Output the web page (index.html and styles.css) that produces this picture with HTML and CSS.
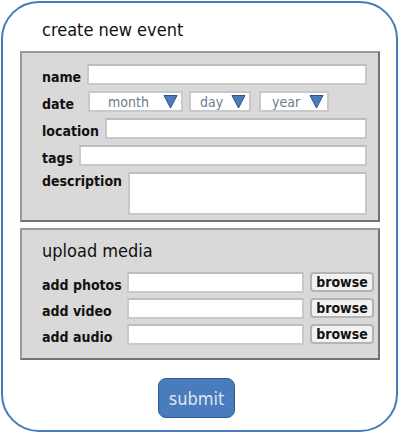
FILE: index.html
```html
<!DOCTYPE html>
<html lang="en">
<head>
    <meta charset="UTF-8">
    <meta name="viewport" content="width=device-width, initial-scale=1.0">
    <title>create new event</title>
    <link rel="stylesheet" href="styles.css">
</head>
<body>
    <div class="card">
        <h1 class="title">create new event</h1>

        <div class="panel details">
            <div class="row">
                <label>name</label>
                <input type="text" class="field">
            </div>
            <div class="row">
                <label class="date-label">date</label>
                <div class="select month"><span>month</span><svg width="15" height="15" viewBox="0 0 15 15"><path d="M1 1.5 H14 L7.5 14 Z" fill="#4a7bbd" stroke="#2c5488" stroke-width="1"/></svg></div>
                <div class="select day"><span>day</span><svg width="15" height="15" viewBox="0 0 15 15"><path d="M1 1.5 H14 L7.5 14 Z" fill="#4a7bbd" stroke="#2c5488" stroke-width="1"/></svg></div>
                <div class="select year"><span>year</span><svg width="15" height="15" viewBox="0 0 15 15"><path d="M1 1.5 H14 L7.5 14 Z" fill="#4a7bbd" stroke="#2c5488" stroke-width="1"/></svg></div>
            </div>
            <div class="row">
                <label>location</label>
                <input type="text" class="field">
            </div>
            <div class="row">
                <label>tags</label>
                <input type="text" class="field">
            </div>
            <div class="row top">
                <label>description</label>
                <textarea class="field area"></textarea>
            </div>
        </div>

        <div class="panel media">
            <h2 class="sub">upload media</h2>
            <div class="uploads">
                <label>add photos</label>
                <input type="text" class="field">
                <button class="browse">browse</button>
                <label>add video</label>
                <input type="text" class="field">
                <button class="browse">browse</button>
                <label>add audio</label>
                <input type="text" class="field">
                <button class="browse">browse</button>
            </div>
        </div>

        <div class="actions">
            <button class="submit">submit</button>
        </div>
    </div>
</body>
</html>
```

FILE: styles.css
```css
body {
    margin: 0;
    font-family: "DejaVu Sans Condensed", "DejaVu Sans", Verdana, sans-serif;
    font-stretch: condensed;
    color: #111;
    background: #fff;
}
.card {
    box-sizing: border-box;
    width: 397px;
    height: 431px;
    margin: 1px 0 0 1px;
    border: 2px solid #4a7bbd;
    border-radius: 38px;
    padding: 16px 0 0 17px;
}
.title {
    margin: 0 0 11px 22px;
    font-size: 18px;
    font-weight: normal;
    line-height: 21px;
}
.panel {
    box-sizing: border-box;
    width: 360px;
    background: #d9d9d9;
    border: 2px solid;
    border-color: #9a9a9a #727272 #727272 #9a9a9a;
}
.details {
    height: 171px;
    padding: 11px 11px 0 20px;
    display: flex;
    flex-direction: column;
    gap: 6px;
}
.row {
    display: flex;
    align-items: flex-end;
    gap: 6px;
    height: 21px;
}
.row.top {
    align-items: flex-start;
    height: 43px;
}
label {
    font-size: 14px;
    font-weight: bold;
    line-height: 16px;
    white-space: nowrap;
}
.row.top label {
    padding-top: 1px;
}
.date-label {
    margin-right: 8px;
}
.field {
    box-sizing: border-box;
    flex: 1;
    min-width: 0;
    height: 21px;
    margin: 0;
    padding: 0;
    background: #fff;
    border: 2px solid #c9c9c9;
    border-top-color: #bdbdbd;
    font: inherit;
}
.area {
    height: 43px;
    resize: none;
}
.select {
    box-sizing: border-box;
    height: 21px;
    display: flex;
    align-items: center;
    justify-content: space-between;
    padding: 0 3px 0 18px;
    background: #fff;
    border: 2px solid #c9c9c9;
    font-size: 14px;
    color: #6f7b8f;
}
.select svg {
    display: block;
}
.month {
    width: 95px;
}
.day {
    width: 62px;
    padding-left: 9px;
}
.year {
    width: 70px;
    padding-left: 11px;
    margin-left: 2px;
}
.media {
    height: 132px;
    margin-top: 6px;
    padding: 10px 4px 0 20px;
}
.sub {
    margin: 0 0 11px;
    font-size: 18px;
    font-weight: normal;
    line-height: 21px;
}
.uploads {
    display: grid;
    grid-template-columns: auto 1fr 65px;
    grid-auto-rows: 21px;
    column-gap: 5px;
    row-gap: 5px;
    align-items: end;
}
.browse {
    box-sizing: border-box;
    height: 20px;
    margin: 0 0 1px 1px;
    padding: 0;
    background: #f2f2f2;
    border: 2px solid #b4b4b4;
    border-radius: 4px;
    font-family: inherit;
    font-stretch: condensed;
    font-size: 14px;
    font-weight: bold;
    line-height: 15px;
    color: #111;
}
.actions {
    display: flex;
    justify-content: center;
    margin: 18px 0 0 -17px;
}
.submit {
    width: 77px;
    height: 40px;
    margin-left: -6px;
    background: #4a7bbd;
    border: 1.5px solid #2f5a90;
    border-radius: 8px;
    color: #dfe6f0;
    font-family: inherit;
    font-stretch: condensed;
    font-size: 18px;
}
```
